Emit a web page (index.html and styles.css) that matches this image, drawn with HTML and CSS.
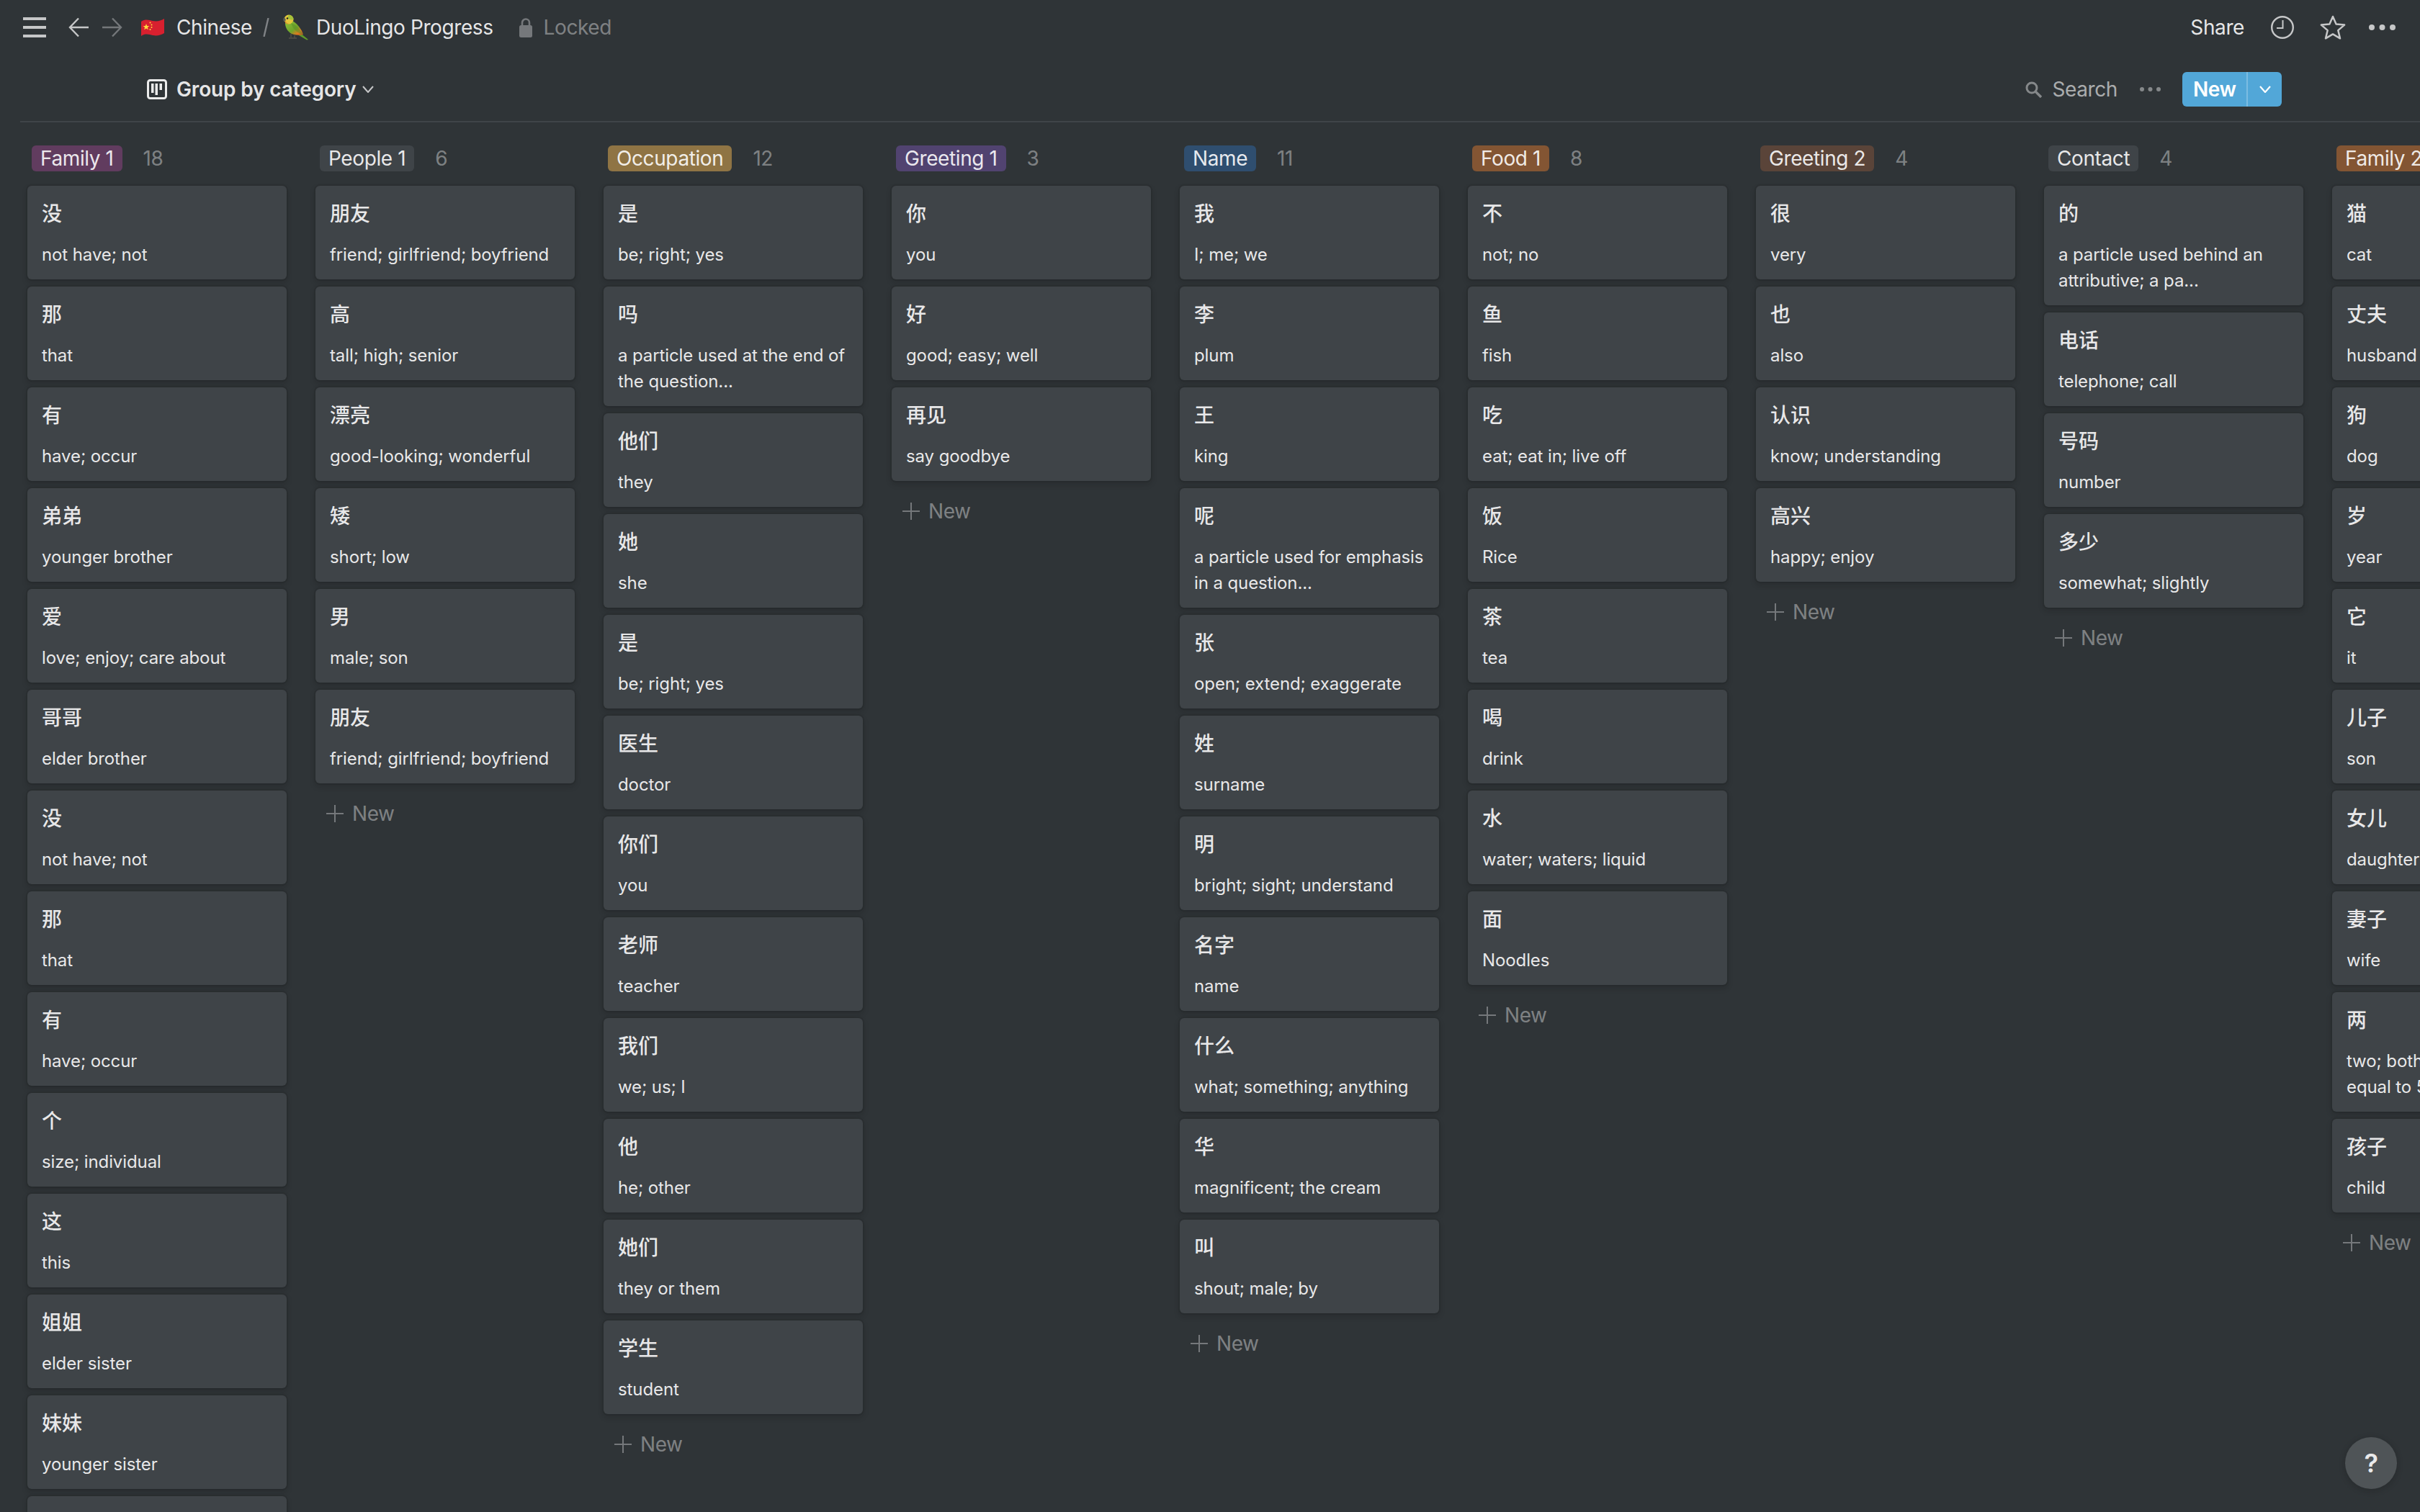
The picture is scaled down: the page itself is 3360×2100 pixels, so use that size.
FILE: index.html
```html
<!DOCTYPE html>
<html>
<head>
  <meta charset="UTF-8">
  <title>DuoLingo Progress</title>
  <link rel="stylesheet" href="styles.css">
</head>
<body>
  <div class="topbar">
    <svg class="ic-menu" width="32" height="28" viewBox="0 0 32 28"><path d="M0 2h32M0 14h32M0 26h32" stroke="#c6c7c8" stroke-width="4"/></svg>
    <svg class="ic-back" width="28" height="28" viewBox="0 0 28 28"><path d="M14 1.5 2 14l12 12.5M2 14h26" fill="none" stroke="#c6c7c8" stroke-width="2.4"/></svg>
    <svg class="ic-fwd" width="28" height="28" viewBox="0 0 28 28"><path d="M14 1.5 26 14 14 26.5M26 14H0" fill="none" stroke="#74777a" stroke-width="2.4"/></svg>
    <svg class="ic-flag" width="32" height="26" viewBox="0 0 32 26">
      <path d="M0 5C6 1 11 3 16 4c6 1 11 0 16-3v20c-5 3-10 4-16 3-5-1-10-3-16 1z" fill="#d8202f"/>
      <path d="m7 8 1.2 3 3.2.1-2.5 2 .9 3.1L7 14.500 4.200 16.200l.9-3.100-2.500-2 3.200-.1z" fill="#ffd83d"/>
      <circle cx="12.500" cy="6.500" r="1" fill="#ffd83d"/><circle cx="14.500" cy="9.500" r="1" fill="#ffd83d"/>
      <circle cx="14.500" cy="13" r="1" fill="#ffd83d"/><circle cx="12.500" cy="16" r="1" fill="#ffd83d"/>
    </svg>
    <span class="crumb">Chinese</span>
    <svg class="ic-slash" width="9" height="26" viewBox="0 0 9 26"><path d="M7.500 0 1.500 26" stroke="#808386" stroke-width="2.400"/></svg>
    <svg class="ic-bird" width="36" height="36" viewBox="0 0 36 36">
      <defs>
        <linearGradient id="wing" x1="0" y1="0" x2="1" y2="1"><stop offset="0" stop-color="#8fc23c"/><stop offset=".55" stop-color="#6fa52a"/><stop offset=".8" stop-color="#e07a1f"/><stop offset="1" stop-color="#c8401c"/></linearGradient>
      </defs>
      <path d="M24 26l11 9-2 .5-12-7z" fill="#5f9a2a"/>
      <path d="M3 11c-.5 6 3 13 9 16 5 2 11 2 16 1-2-7-9-17-17-20z" fill="url(#wing)"/>
      <path d="M11 12c6 1 13 9 17 16-7-1-14-7-17-16z" fill="#5c8f28" opacity=".55"/>
      <circle cx="8" cy="7" r="6.500" fill="#e3c63a"/>
      <path d="M9 .8c3 .5 5.500 3 5.500 6.200-3 1.500-7 0-8-3.500 .5-1.500 1.500-2.700 2.500-2.700z" fill="#9bbf3a" opacity=".85"/>
      <path d="M3 8c1 3 3 5 6 5-3 1-5 0-6-2z" fill="#dd8f30"/>
      <circle cx="6" cy="5.500" r="1.300" fill="#222"/>
      <path d="M2 4c-2 1-2.500 4-1 6l3-2z" fill="#5a5a55"/>
      <path d="M11 27v5M16 29v3.500M8 33h11" stroke="#55524a" stroke-width="1.300"/>
    </svg>
    <span class="crumb crumb-page">DuoLingo Progress</span>
    <svg class="ic-lock" width="18" height="28" viewBox="0 0 18 28"><path d="M4 13V7.500a5 5 0 0 1 10 0V13" fill="none" stroke="#75787b" stroke-width="2.600"/><rect y="11" width="18" height="17" rx="2.500" fill="#75787b"/></svg>
    <span class="locked">Locked</span>
    <span class="share">Share</span>
    <svg class="ic-clock" width="32" height="32" viewBox="0 0 32 32"><circle cx="16" cy="16" r="14.800" fill="none" stroke="#c6c7c8" stroke-width="2.400"/><path d="M16.500 6v11H8" fill="none" stroke="#c6c7c8" stroke-width="2"/></svg>
    <svg class="ic-star" width="36" height="34" viewBox="0 0 36 34"><path d="m18 2 4.600 10.600 11.500 1-8.800 7.500 2.700 11.200L18 26.400 8 32.300l2.700-11.200L1.900 13.600l11.500-1z" fill="none" stroke="#c6c7c8" stroke-width="2.500" stroke-linejoin="round"/></svg>
    <svg class="ic-dots" width="37" height="8" viewBox="0 0 37 8"><circle cx="4" cy="4" r="4" fill="#c6c7c8"/><circle cx="18.500" cy="4" r="4" fill="#c6c7c8"/><circle cx="33" cy="4" r="4" fill="#c6c7c8"/></svg>
  </div>

  <div class="viewbar">
    <svg class="ic-board" width="28" height="28" viewBox="0 0 28 28"><rect x="1.500" y="1.500" width="25" height="25" rx="3" fill="none" stroke="#ebebeb" stroke-width="3"/><path d="M6 6h3.500v13H6zM11.500 6H15v16h-3.500zM17.500 6H21v9h-3.500z" fill="#ebebeb"/></svg>
    <span class="view-name">Group by category</span>
    <svg class="ic-caret" width="16" height="10" viewBox="0 0 16 10"><path d="m1 1 7 8 7-8" fill="none" stroke="#c6c7c8" stroke-width="2"/></svg>
    <svg class="ic-search" width="23" height="23" viewBox="0 0 23 23"><circle cx="9" cy="9" r="7" fill="none" stroke="#85888a" stroke-width="3"/><path d="m14 14 8 8" stroke="#85888a" stroke-width="3.400"/></svg>
    <span class="search">Search</span>
    <svg class="ic-dots-sm" width="29" height="6" viewBox="0 0 29 6"><circle cx="3" cy="3" r="3" fill="#85888a"/><circle cx="14.500" cy="3" r="3" fill="#85888a"/><circle cx="26" cy="3" r="3" fill="#85888a"/></svg>
    <div class="new-btn">
      <span class="new-main">New</span>
      <span class="new-more"><svg width="16" height="10" viewBox="0 0 16 10"><path d="m1 1 7 8 7-8" fill="none" stroke="#fff" stroke-width="2.200"/></svg></span>
    </div>
  </div>

  <div class="board">
    <div class="col">
      <div class="col-head"><span class="pill pink">Family 1</span><span class="count">18</span></div>
      <div class="card"><div class="word">没</div><div class="meaning">not have; not</div></div>
      <div class="card"><div class="word">那</div><div class="meaning">that</div></div>
      <div class="card"><div class="word">有</div><div class="meaning">have; occur</div></div>
      <div class="card"><div class="word">弟弟</div><div class="meaning">younger brother</div></div>
      <div class="card"><div class="word">爱</div><div class="meaning">love; enjoy; care about</div></div>
      <div class="card"><div class="word">哥哥</div><div class="meaning">elder brother</div></div>
      <div class="card"><div class="word">没</div><div class="meaning">not have; not</div></div>
      <div class="card"><div class="word">那</div><div class="meaning">that</div></div>
      <div class="card"><div class="word">有</div><div class="meaning">have; occur</div></div>
      <div class="card"><div class="word">个</div><div class="meaning">size; individual</div></div>
      <div class="card"><div class="word">这</div><div class="meaning">this</div></div>
      <div class="card"><div class="word">姐姐</div><div class="meaning">elder sister</div></div>
      <div class="card"><div class="word">妹妹</div><div class="meaning">younger sister</div></div>
      <div class="card"></div>
    </div>

    <div class="col">
      <div class="col-head"><span class="pill gray">People 1</span><span class="count">6</span></div>
      <div class="card"><div class="word">朋友</div><div class="meaning">friend; girlfriend; boyfriend</div></div>
      <div class="card"><div class="word">高</div><div class="meaning">tall; high; senior</div></div>
      <div class="card"><div class="word">漂亮</div><div class="meaning">good-looking; wonderful</div></div>
      <div class="card"><div class="word">矮</div><div class="meaning">short; low</div></div>
      <div class="card"><div class="word">男</div><div class="meaning">male; son</div></div>
      <div class="card"><div class="word">朋友</div><div class="meaning">friend; girlfriend; boyfriend</div></div>
      <div class="add"><svg width="26" height="26" viewBox="0 0 26 26"><path d="M13 1v24M1 13h24" stroke="#75787b" stroke-width="2"/></svg>New</div>
    </div>

    <div class="col">
      <div class="col-head"><span class="pill gold">Occupation</span><span class="count">12</span></div>
      <div class="card"><div class="word">是</div><div class="meaning">be; right; yes</div></div>
      <div class="card"><div class="word">吗</div><div class="meaning">a particle used at the end of the question...</div></div>
      <div class="card"><div class="word">他们</div><div class="meaning">they</div></div>
      <div class="card"><div class="word">她</div><div class="meaning">she</div></div>
      <div class="card"><div class="word">是</div><div class="meaning">be; right; yes</div></div>
      <div class="card"><div class="word">医生</div><div class="meaning">doctor</div></div>
      <div class="card"><div class="word">你们</div><div class="meaning">you</div></div>
      <div class="card"><div class="word">老师</div><div class="meaning">teacher</div></div>
      <div class="card"><div class="word">我们</div><div class="meaning">we; us; I</div></div>
      <div class="card"><div class="word">他</div><div class="meaning">he; other</div></div>
      <div class="card"><div class="word">她们</div><div class="meaning">they or them</div></div>
      <div class="card"><div class="word">学生</div><div class="meaning">student</div></div>
      <div class="add"><svg width="26" height="26" viewBox="0 0 26 26"><path d="M13 1v24M1 13h24" stroke="#75787b" stroke-width="2"/></svg>New</div>
    </div>

    <div class="col">
      <div class="col-head"><span class="pill purple">Greeting 1</span><span class="count">3</span></div>
      <div class="card"><div class="word">你</div><div class="meaning">you</div></div>
      <div class="card"><div class="word">好</div><div class="meaning">good; easy; well</div></div>
      <div class="card"><div class="word">再见</div><div class="meaning">say goodbye</div></div>
      <div class="add"><svg width="26" height="26" viewBox="0 0 26 26"><path d="M13 1v24M1 13h24" stroke="#75787b" stroke-width="2"/></svg>New</div>
    </div>

    <div class="col">
      <div class="col-head"><span class="pill blue">Name</span><span class="count">11</span></div>
      <div class="card"><div class="word">我</div><div class="meaning">I; me; we</div></div>
      <div class="card"><div class="word">李</div><div class="meaning">plum</div></div>
      <div class="card"><div class="word">王</div><div class="meaning">king</div></div>
      <div class="card"><div class="word">呢</div><div class="meaning">a particle used for emphasis in a question...</div></div>
      <div class="card"><div class="word">张</div><div class="meaning">open; extend; exaggerate</div></div>
      <div class="card"><div class="word">姓</div><div class="meaning">surname</div></div>
      <div class="card"><div class="word">明</div><div class="meaning">bright; sight; understand</div></div>
      <div class="card"><div class="word">名字</div><div class="meaning">name</div></div>
      <div class="card"><div class="word">什么</div><div class="meaning">what; something; anything</div></div>
      <div class="card"><div class="word">华</div><div class="meaning">magnificent; the cream</div></div>
      <div class="card"><div class="word">叫</div><div class="meaning">shout; male; by</div></div>
      <div class="add"><svg width="26" height="26" viewBox="0 0 26 26"><path d="M13 1v24M1 13h24" stroke="#75787b" stroke-width="2"/></svg>New</div>
    </div>

    <div class="col">
      <div class="col-head"><span class="pill orange">Food 1</span><span class="count">8</span></div>
      <div class="card"><div class="word">不</div><div class="meaning">not; no</div></div>
      <div class="card"><div class="word">鱼</div><div class="meaning">fish</div></div>
      <div class="card"><div class="word">吃</div><div class="meaning">eat; eat in; live off</div></div>
      <div class="card"><div class="word">饭</div><div class="meaning">Rice</div></div>
      <div class="card"><div class="word">茶</div><div class="meaning">tea</div></div>
      <div class="card"><div class="word">喝</div><div class="meaning">drink</div></div>
      <div class="card"><div class="word">水</div><div class="meaning">water; waters; liquid</div></div>
      <div class="card"><div class="word">面</div><div class="meaning">Noodles</div></div>
      <div class="add"><svg width="26" height="26" viewBox="0 0 26 26"><path d="M13 1v24M1 13h24" stroke="#75787b" stroke-width="2"/></svg>New</div>
    </div>

    <div class="col">
      <div class="col-head"><span class="pill brown">Greeting 2</span><span class="count">4</span></div>
      <div class="card"><div class="word">很</div><div class="meaning">very</div></div>
      <div class="card"><div class="word">也</div><div class="meaning">also</div></div>
      <div class="card"><div class="word">认识</div><div class="meaning">know; understanding</div></div>
      <div class="card"><div class="word">高兴</div><div class="meaning">happy; enjoy</div></div>
      <div class="add"><svg width="26" height="26" viewBox="0 0 26 26"><path d="M13 1v24M1 13h24" stroke="#75787b" stroke-width="2"/></svg>New</div>
    </div>

    <div class="col">
      <div class="col-head"><span class="pill gray">Contact</span><span class="count">4</span></div>
      <div class="card"><div class="word">的</div><div class="meaning">a particle used behind an attributive; a pa...</div></div>
      <div class="card"><div class="word">电话</div><div class="meaning">telephone; call</div></div>
      <div class="card"><div class="word">号码</div><div class="meaning">number</div></div>
      <div class="card"><div class="word">多少</div><div class="meaning">somewhat; slightly</div></div>
      <div class="add"><svg width="26" height="26" viewBox="0 0 26 26"><path d="M13 1v24M1 13h24" stroke="#75787b" stroke-width="2"/></svg>New</div>
    </div>

    <div class="col">
      <div class="col-head"><span class="pill orange">Family 2</span><span class="count">10</span></div>
      <div class="card"><div class="word">猫</div><div class="meaning">cat</div></div>
      <div class="card"><div class="word">丈夫</div><div class="meaning">husband</div></div>
      <div class="card"><div class="word">狗</div><div class="meaning">dog</div></div>
      <div class="card"><div class="word">岁</div><div class="meaning">year</div></div>
      <div class="card"><div class="word">它</div><div class="meaning">it</div></div>
      <div class="card"><div class="word">儿子</div><div class="meaning">son</div></div>
      <div class="card"><div class="word">女儿</div><div class="meaning">daughter</div></div>
      <div class="card"><div class="word">妻子</div><div class="meaning">wife</div></div>
      <div class="card"><div class="word">两</div><div class="meaning">two; both; a unit of weight equal to 50 grams...</div></div>
      <div class="card"><div class="word">孩子</div><div class="meaning">child</div></div>
      <div class="add"><svg width="26" height="26" viewBox="0 0 26 26"><path d="M13 1v24M1 13h24" stroke="#75787b" stroke-width="2"/></svg>New</div>
    </div>
  </div>

  <div class="help">?</div>
</body>
</html>
```

FILE: styles.css
```css
* {
  box-sizing: border-box;
}

html, body {
  height: 100%;
}

body {
  margin: 0;
  overflow: hidden;
  background: #2f3437;
  color: rgba(255, 255, 255, 0.9);
  font-family: Inter, "Noto Sans CJK SC", sans-serif;
  font-size: 28px;
  letter-spacing: -0.4px;
}

svg {
  display: block;
  flex: none;
}

.topbar {
  display: flex;
  align-items: center;
  height: 76px;
  padding-left: 32px;
}

.ic-back { margin-left: 31px; }
.ic-fwd { margin-left: 19px; }
.ic-flag { margin-left: 26px; }
.crumb { margin-left: 17px; }
.crumb-page { margin-left: 10px; }
.ic-slash { margin-left: 15px; }
.ic-bird { margin-left: 19px; }
.ic-lock { margin-left: 36px; }

.locked {
  margin-left: 16px;
  color: rgba(255, 255, 255, 0.4);
}

.share {
  margin-left: auto;
}

.ic-clock { margin-left: 37px; }
.ic-star { margin-left: 36px; }
.ic-dots { margin-left: 32px; margin-right: 34px; }

.viewbar {
  display: flex;
  align-items: center;
  height: 94px;
  margin-left: 28px;
  padding: 4px 192px 0 176px;
  border-bottom: 2px solid #3f4448;
}

.view-name {
  margin-left: 13px;
  font-weight: 600;
  letter-spacing: -0.15px;
}

.ic-caret { margin-left: 8px; }
.ic-search { margin-left: auto; }

.search {
  margin-left: 14px;
  color: rgba(255, 255, 255, 0.6);
}

.ic-dots-sm { margin-left: 31px; }

.new-btn {
  display: flex;
  height: 48px;
  margin-left: 30px;
  border-radius: 6px;
  background: #52a7d8;
  color: #fff;
  font-weight: 600;
}

.new-main {
  display: flex;
  align-items: center;
  width: 91px;
  padding-left: 15px;
  border-right: 2px solid #7cbce2;
}

.new-more {
  display: flex;
  align-items: center;
  justify-content: center;
  width: 47px;
}

.board {
  display: flex;
  gap: 40px;
  padding: 32px 0 0 38px;
}

.col {
  flex: none;
  width: 360px;
}

.col-head {
  display: flex;
  align-items: center;
  height: 36px;
  margin-bottom: 20px;
  padding-left: 6px;
}

.pill {
  padding: 0 12px;
  border-radius: 6px;
  line-height: 36px;
  white-space: nowrap;
}

.pink { background: #613c5f; }
.gray { background: #3f4448; }
.gold { background: #8f7444; }
.purple { background: #514370; }
.blue { background: #2f4e6f; }
.orange { background: #835533; }
.brown { background: #5a4439; }

.count {
  margin-left: 29px;
  color: rgba(255, 255, 255, 0.4);
}

.card {
  min-height: 130px;
  margin-bottom: 10px;
  padding: 18px 16px 16px 20px;
  border-radius: 6px;
  background: #3f4448;
  box-shadow: 0 0 0 2px rgba(15, 15, 15, 0.1), 0 4px 8px rgba(15, 15, 15, 0.2);
}

.word {
  font-weight: 500;
  line-height: 42px;
  margin-bottom: 18px;
  letter-spacing: 0;
}

.meaning {
  font-size: 24px;
  line-height: 36px;
  letter-spacing: -0.1px;
}

.add {
  display: flex;
  align-items: center;
  gap: 11px;
  height: 64px;
  padding-left: 14px;
  color: rgba(255, 255, 255, 0.4);
}

.help {
  position: absolute;
  right: 32px;
  bottom: 32px;
  display: flex;
  align-items: center;
  justify-content: center;
  width: 72px;
  height: 72px;
  border-radius: 50%;
  background: #4f5457;
  font-size: 36px;
  font-weight: 600;
  box-shadow: 0 2px 8px rgba(15, 15, 15, 0.25);
}
```
